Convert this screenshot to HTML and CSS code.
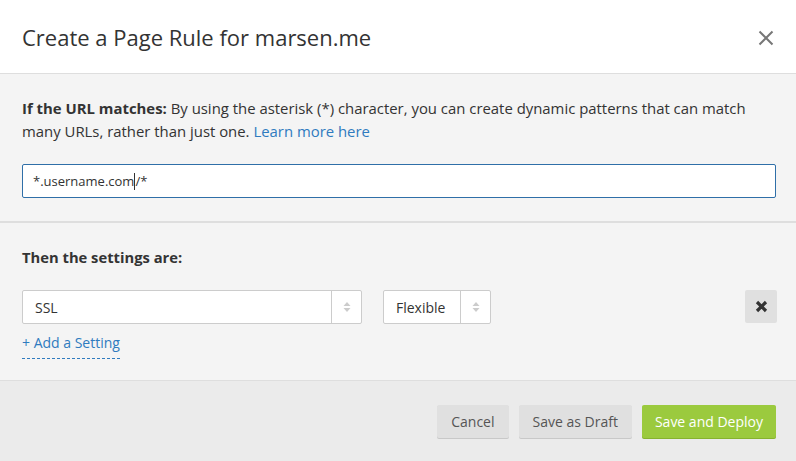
FILE: index.html
```html
<!DOCTYPE html>
<html>
<head>
<meta charset="utf-8">
<link rel="stylesheet" href="styles.css">
</head>
<body>
<div class="modal">
  <header class="modal-header">
    <h1 class="modal-title">Create a Page Rule for marsen.me</h1>
    <button class="close-btn" aria-label="Close">
      <svg width="16" height="16" viewBox="0 0 16 16"><path d="M1.5 1.5 L14.5 14.5 M14.5 1.5 L1.5 14.5" stroke="#777" stroke-width="2" fill="none"/></svg>
    </button>
  </header>
  <section class="section url-section">
    <p class="desc"><strong>If the URL matches:</strong> By using the asterisk (*) character, you can create dynamic patterns that can match many URLs, rather than just one. <a class="link" href="#">Learn more here</a></p>
    <div class="url-input"><span>*.username.com</span><span class="caret"></span><span>/*</span></div>
  </section>
  <section class="section settings-section">
    <p class="label"><strong>Then the settings are:</strong></p>
    <div class="settings-row">
      <div class="select select-wide">
        <span class="select-value">SSL</span>
        <span class="select-arrow"><svg width="8" height="12" viewBox="0 0 8 12"><path d="M4 1 L7.5 5 H0.5 Z M4 11 L7.5 7 H0.5 Z" fill="#ccc"/></svg></span>
      </div>
      <div class="select select-narrow">
        <span class="select-value">Flexible</span>
        <span class="select-arrow"><svg width="8" height="12" viewBox="0 0 8 12"><path d="M4 1 L7.5 5 H0.5 Z M4 11 L7.5 7 H0.5 Z" fill="#ccc"/></svg></span>
      </div>
      <button class="delete-btn" aria-label="Remove">
        <svg width="13" height="13" viewBox="0 0 13 13"><path d="M2 2 L11 11 M11 2 L2 11" stroke="#333" stroke-width="3.2" stroke-linecap="butt" fill="none"/></svg>
      </button>
    </div>
    <a class="add-link" href="#">+ Add a Setting</a>
  </section>
  <footer class="modal-footer">
    <button class="btn">Cancel</button>
    <button class="btn">Save as Draft</button>
    <button class="btn btn-primary">Save and Deploy</button>
  </footer>
</div>
</body>
</html>
```
FILE: styles.css
```css
* { box-sizing: border-box; }
html, body { margin: 0; padding: 0; }
body {
  font-family: "Open Sans", "Liberation Sans", sans-serif;
  color: #333;
  background: #fff;
  width: 796px;
  height: 461px;
  overflow: hidden;
}
.modal { display: flex; flex-direction: column; width: 796px; }
.modal-header {
  height: 74px;
  display: flex;
  align-items: center;
  justify-content: space-between;
  padding: 0 22px 0 22px;
  border-bottom: 1px solid #dedede;
  background: #fff;
}
.modal-title {
  margin: 0;
  font-size: 22px;
  font-weight: 400;
  color: #333;
}
.close-btn {
  border: 0;
  background: none;
  padding: 0;
  width: 16px;
  height: 16px;
  display: flex;
  position: relative;
  top: 1px;
}
.section {
  background: #f4f4f4;
  padding: 0 20px 0 22px;
}
.url-section {
  padding-top: 23px;
  padding-bottom: 23px;
  border-bottom: 2px solid #dedede;
}
.desc {
  margin: 0;
  font-size: 14.9px;
  line-height: 23px;
  color: #333;
}
.desc strong, .label strong { font-weight: 700; }
.link { color: #2f7bbf; text-decoration: none; }
.url-input {
  margin-top: 21px;
  height: 34px;
  border: 1px solid #2f6fa8;
  border-radius: 2px;
  background: #fff;
  display: flex;
  align-items: center;
  padding-left: 10px;
  font-size: 13px;
  color: #333;
}
.caret {
  display: inline-block;
  width: 1px;
  height: 17px;
  background: #333;
}
.settings-section {
  padding-top: 23px;
  padding-bottom: 21px;
  border-bottom: 1px solid #dedede;
  padding-right: 19px;
}
.label {
  margin: 0;
  font-size: 14.75px;
  line-height: 23px;
  color: #333;
}
.settings-row {
  margin-top: 21px;
  display: flex;
  align-items: flex-start;
  gap: 21px;
}
.select {
  height: 34px;
  border: 1px solid #ccc;
  border-radius: 2px;
  background: #fff;
  display: flex;
  align-items: stretch;
  font-size: 14px;
  color: #333;
}
.select-wide { width: 340px; }
.select-narrow { width: 108px; }
.select-value {
  flex: 1;
  display: flex;
  align-items: center;
  padding-left: 12px;
}
.select-arrow {
  width: 30px;
  border-left: 1px solid #ccc;
  display: flex;
  align-items: center;
  justify-content: center;
}
.delete-btn {
  margin-left: auto;
  width: 32px;
  height: 33px;
  border: 0;
  border-radius: 2px;
  background: #e0e0e0;
  display: flex;
  align-items: center;
  justify-content: center;
  padding: 0;
}
.add-link {
  display: inline-block;
  margin-top: 8px;
  font-size: 14px;
  line-height: 22px;
  color: #2f7bbf;
  text-decoration: none;
  border-bottom: 1px dashed #2f7bbf;
  padding: 0 0 4px 0;
}
.modal-footer {
  background: #ebebeb;
  height: 80px;
  display: flex;
  justify-content: flex-end;
  align-items: flex-start;
  gap: 10px;
  padding: 24px 20px 0 0;
}
.btn {
  height: 33px;
  border: 0;
  border-radius: 2px;
  background: #e0e0e0;
  box-shadow: 0 1px 0 #c8c8c8;
  font-family: "Open Sans", "Liberation Sans", sans-serif;
  font-size: 14px;
  color: #555;
  padding: 0 14px;
}
.btn-primary {
  background: #9bca3e;
  color: #fff;
  box-shadow: 0 1px 0 #86b22f;
  padding: 0 13px;
}
```
